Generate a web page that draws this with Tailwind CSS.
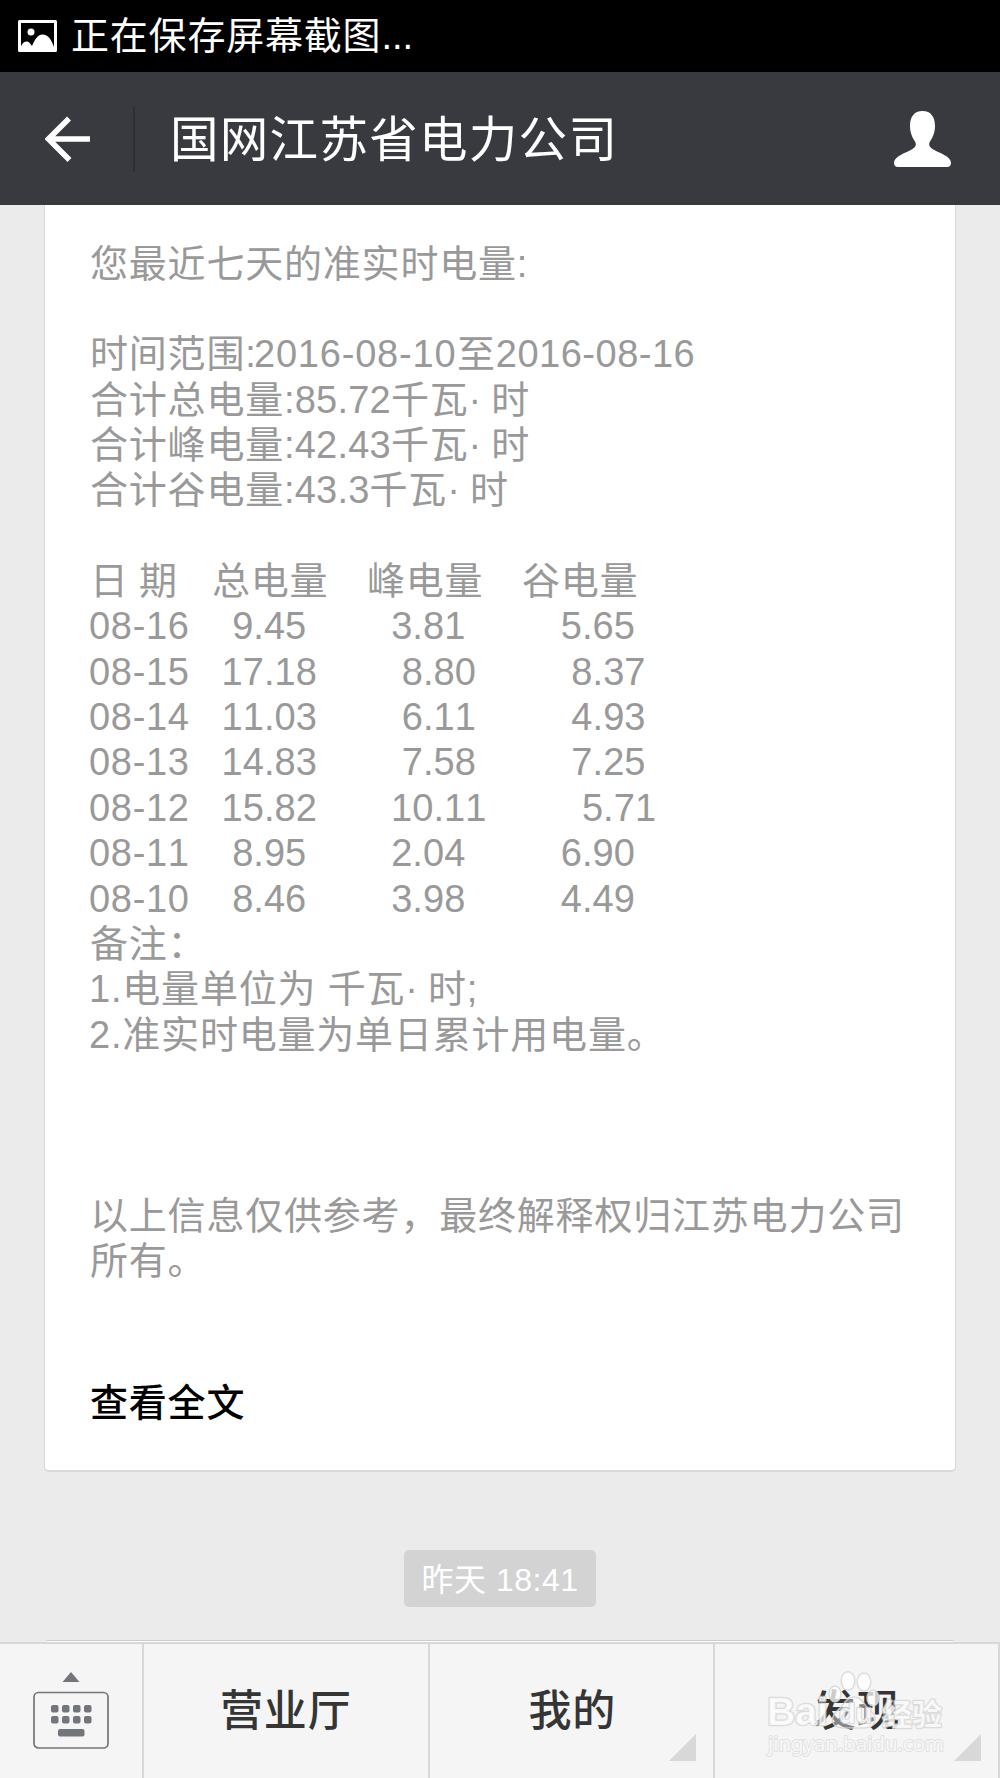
<!DOCTYPE html>
<html lang="zh-CN">
<head>
    <meta charset="UTF-8">
    <meta name="viewport" content="width=device-width, initial-scale=1.0">
    <title>国网江苏省电力公司</title>
    <script src="https://cdn.jsdelivr.net/npm/@tailwindcss/browser@4"></script>
</head>
<body class="bg-black font-['Liberation_Sans','Noto_Sans_CJK_SC',sans-serif]">
    <div class="relative flex flex-col w-[1000px] h-[1778px] overflow-hidden bg-[#ebebeb] [font-kerning:none]">

        <!-- status bar -->
        <div class="flex items-center h-[72px] shrink-0 bg-black text-white pl-[18px]">
            <svg class="w-[39px] h-8" viewBox="0 0 39 32" fill="white">
                <path fill-rule="evenodd" d="M1.5 0h36a1.5 1.5 0 0 1 1.5 1.5v29a1.5 1.5 0 0 1-1.500 1.500h-36A1.500 1.500 0 0 1 0 30.500v-29A1.500 1.500 0 0 1 1.500 0zM3 3v23c2-3.500 3.500-4.500 5.500-4.500 2.500 0 3.500 2 5.500 4.500 3-7 6-11.500 10.500-11.500 5 0 8.500 4 11.500 12.500V3z"/>
                <circle cx="13" cy="12" r="3.500"/>
            </svg>
            <span class="ml-[14px] text-[38px] leading-[72px] tracking-[0.8px]">正在保存屏幕截图<span class="tracking-normal">...</span></span>
        </div>

        <!-- title bar -->
        <div class="flex items-center h-[133px] shrink-0 bg-[#393a3f] text-white">
            <svg class="ml-[45px] w-[45px] h-[46px]" viewBox="0 0 45 46" fill="none" stroke="white" stroke-width="5.500">
                <path d="M24 2.500L3.500 23l21 21M4 23h41"/>
            </svg>
            <div class="ml-[43px] w-[2px] h-[66px] bg-[#2e2f33]"></div>
            <h1 class="ml-[35px] pt-[2px] text-[48.5px] leading-[66px] tracking-[1.3px]">国网江苏省电力公司</h1>
            <svg class="ml-auto mr-[49px] w-[57px] h-[56px]" viewBox="0 0 57 56" fill="white">
                <path d="M28.500 0C37 0 41 6 41 15c0 8-3 12-5.500 16.500-1 2.500 0 4.500 3 6.500C45 42 57 45 57 52c0 2.500-1.500 4-4 4H4c-2.500 0-4-1.500-4-4 0-7 12-10 18.500-14 3-2 4-4 3-6.500C19 27 16 23 16 15 16 6 20 0 28.500 0z"/>
            </svg>
        </div>

        <!-- message card -->
        <div class="flex flex-col mx-[44px] h-[1267px] shrink-0 rounded-b-[5px] border border-t-0 border-b-2 border-[#d9d9d9] bg-white pt-[36.5px] pl-[45px] text-[38px] leading-[45.36px] text-[#999]">
            <div class="[&>p]:whitespace-pre tracking-[0.8px]">
                <p>您最近七天的准实时电量:</p>
                <p>&nbsp;</p>
                <p class="flex"><span class="w-[164px]">时间范围:</span><span class="w-[203px]">2016-08-10</span><span>至</span><span class="tracking-[0.5px]">2016-08-16</span></p>
                <p>合计总电量<span class="tracking-[0.2px]">:85.72</span>千瓦<span class="tracking-[-0.2px]">· </span>时</p>
                <p>合计峰电量<span class="tracking-[0.2px]">:42.43</span>千瓦<span class="tracking-[-0.2px]">· </span>时</p>
                <p>合计谷电量<span class="tracking-[0.2px]">:43.3</span>千瓦<span class="tracking-[-0.2px]">· </span>时</p>
                <p>&nbsp;</p>
                <p class="flex"><span class="w-[49px]">日</span><span class="w-[73px]">期</span><span class="w-[155px]">总电量</span><span class="w-[155px]">峰电量</span><span>谷电量</span></p>
            </div>
            <div class="[&>p]:whitespace-pre -ml-[1px] tracking-[0.05px]">
                <p><span class="tracking-[0.7px]">08-16</span>    9.45        3.81         5.65</p>
                <p><span class="tracking-[0.7px]">08-15</span>   17.18        8.80         8.37</p>
                <p><span class="tracking-[0.7px]">08-14</span>   11.03        6.11         4.93</p>
                <p><span class="tracking-[0.7px]">08-13</span>   14.83        7.58         7.25</p>
                <p><span class="tracking-[0.7px]">08-12</span>   15.82       10.11         5.71</p>
                <p><span class="tracking-[0.7px]">08-11</span>    8.95        2.04         6.90</p>
                <p><span class="tracking-[0.7px]">08-10</span>    8.46        3.98         4.49</p>
            </div>
            <div class="[&>p]:whitespace-pre tracking-[0.8px]">
                <p>备注：</p>
                <p class="-ml-[1px]">1.电量单位为 千瓦<span class="tracking-[-0.2px]">· </span>时;</p>
                <p class="-ml-[1px]">2.准实时电量为单日累计用电量。</p>
                <p>&nbsp;</p>
                <p>&nbsp;</p>
                <p>&nbsp;</p>
                <p>以上信息仅供参考，最终解释权归江苏电力公司</p>
                <p>所有。</p>
            </div>
            <a class="mt-[96px] font-medium tracking-[0.8px] text-black">查看全文</a>
        </div>

        <!-- time label -->
        <div class="self-center mt-[78px] h-[57px] w-[192px] shrink-0 rounded-[5px] bg-[#d3d3d3] text-center text-[32px] leading-[60px] tracking-[0.5px] text-white">昨天 18:41</div>

        <!-- top edge of the next message -->
        <div class="mt-[33px] mx-[46px] h-[2px] shrink-0 rounded-t-[2px] border-t border-[#ccc] bg-white"></div>

        <!-- bottom menu -->
        <div class="flex h-[136px] shrink-0 border-t-2 border-r-2 border-[#d8d8d8] bg-[#f5f5f5] text-[43px] leading-[135px] tracking-[0.8px] text-[#353535]">
            <div class="w-[144px] border-r-2 border-[#d8d8d8]">
                <svg class="ml-[33px] mt-[28px] w-[76px] h-[78px]" viewBox="0 0 76 78" fill="#72767b">
                    <path d="M38 0l8.500 10h-17z"/>
                    <rect x="1" y="20.500" width="74" height="55.500" rx="4.500" fill="none" stroke="#72767b" stroke-width="1.700"/>
                    <rect x="18" y="33" width="7.500" height="7.500" rx="2"/>
                    <rect x="29" y="33" width="7.500" height="7.500" rx="2"/>
                    <rect x="40" y="33" width="7.500" height="7.500" rx="2"/>
                    <rect x="51" y="33" width="7.500" height="7.500" rx="2"/>
                    <rect x="18" y="44" width="7.500" height="7.500" rx="2"/>
                    <rect x="29" y="44" width="7.500" height="7.500" rx="2"/>
                    <rect x="40" y="44" width="7.500" height="7.500" rx="2"/>
                    <rect x="51" y="44" width="7.500" height="7.500" rx="2"/>
                    <rect x="25" y="57" width="26.500" height="7.500" rx="2"/>
                </svg>
            </div>
            <div class="w-[285.5px] border-r-2 border-[#d8d8d8] text-center font-medium">营业厅</div>
            <div class="relative w-[285.5px] border-r-2 border-[#d8d8d8] text-center font-medium pl-[2px]">我的
                <svg class="absolute right-[17px] bottom-[17px] w-[27px] h-[27px]" viewBox="0 0 27 27" fill="#d8d8d8"><path d="M27 0v27H0z"/></svg>
            </div>
            <div class="relative flex-1 text-center font-medium">发现
                <svg class="absolute right-[17px] bottom-[17px] w-[27px] h-[27px]" viewBox="0 0 27 27" fill="#d8d8d8"><path d="M27 0v27H0z"/></svg>
                <!-- watermark -->
                <svg class="absolute left-[45px] top-[22px] w-[190px] h-[100px] tracking-normal" viewBox="0 0 190 100" fill="white" fill-opacity=".75" stroke="#d4d4d4" stroke-opacity=".8" stroke-width="1.500" stroke-linejoin="round">
                    <ellipse cx="88" cy="15" rx="6.800" ry="9.300"/>
                    <ellipse cx="104" cy="16" rx="6.800" ry="9"/>
                    <ellipse cx="75" cy="28" rx="6" ry="8"/>
                    <ellipse cx="113" cy="32" rx="6" ry="8"/>
                    <path fill-opacity=".4" d="M94 31c6 0 9 5 13 10 6 6 10 9 7 16-3 6-11 5-20 5s-18 1-21-5c-2-7 2-10 8-16 4-5 7-10 13-10z"/>
                    <g paint-order="stroke" stroke-width="2.500">
                        <text x="7" y="59" font-size="39" font-weight="700" font-family="Liberation Sans" textLength="61" lengthAdjust="spacingAndGlyphs">Bai</text>
                        <text x="79" y="57" font-size="28" font-weight="700" font-family="Liberation Sans" textLength="33" lengthAdjust="spacingAndGlyphs">du</text>
                        <text x="122" y="59" font-size="30" font-weight="700" font-family="Noto Sans CJK SC" textLength="60">经验</text>
                        <text x="8" y="85" font-size="20" font-weight="400" font-family="Noto Sans" textLength="176" lengthAdjust="spacingAndGlyphs" stroke-width="2" stroke-opacity=".6">jingyan.baidu.com</text>
                    </g>
                </svg>
            </div>
        </div>
    </div>
</body>
</html>
